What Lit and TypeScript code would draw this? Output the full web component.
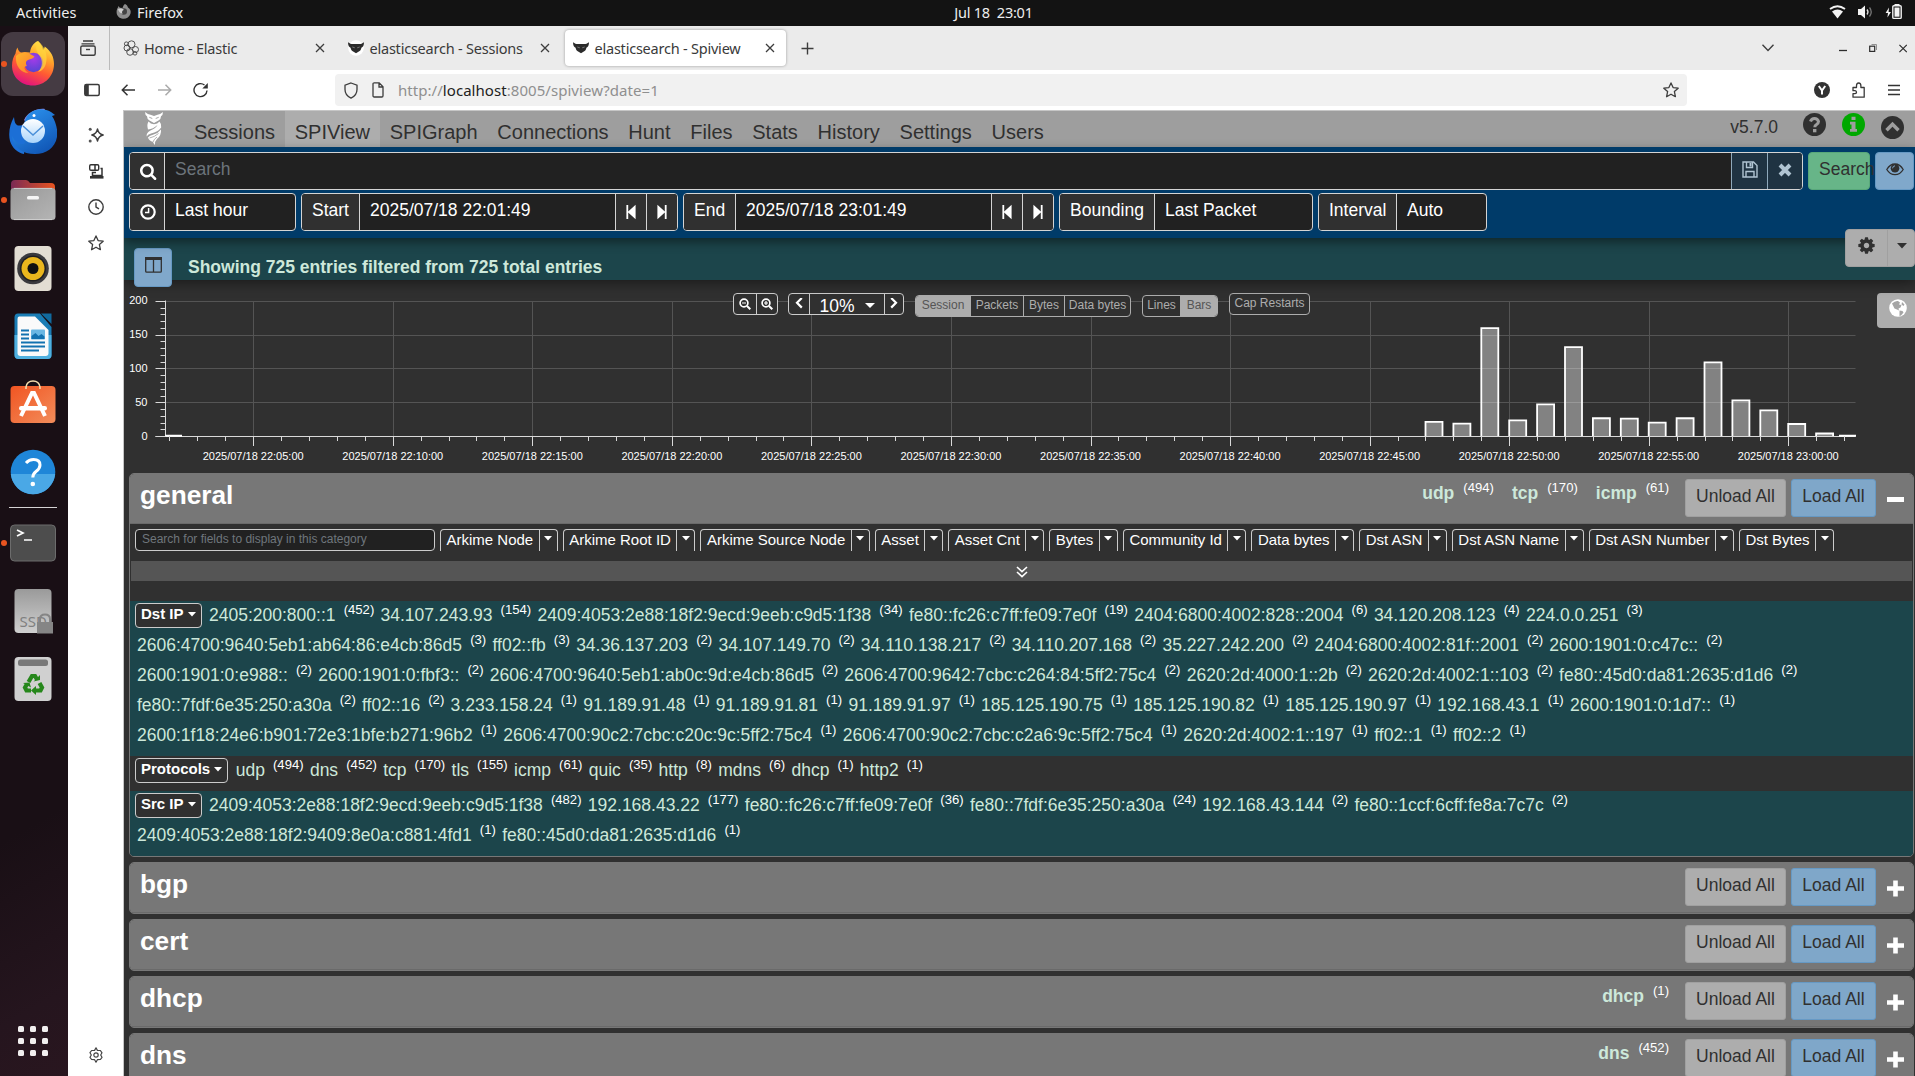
import { LitElement, html, svg, css, nothing } from "lit";
import { customElement, property } from "lit/decorators.js";

type Hit = [string, number];

const NAV = ["Sessions", "SPIView", "SPIGraph", "Connections", "Hunt", "Files", "Stats", "History", "Settings", "Users"];

const FIELDS = ["Arkime Node", "Arkime Root ID", "Arkime Source Node", "Asset", "Asset Cnt", "Bytes", "Community Id",
  "Data bytes", "Dst ASN", "Dst ASN Name", "Dst ASN Number", "Dst Bytes"];

const SPI: { label: string; lines: Hit[][] }[] = [
  {
    label: "Dst IP",
    lines: [
      [["2405:200:800::1", 452], ["34.107.243.93", 154], ["2409:4053:2e88:18f2:9ecd:9eeb:c9d5:1f38", 34], ["fe80::fc26:c7ff:fe09:7e0f", 19], ["2404:6800:4002:828::2004", 6], ["34.120.208.123", 4], ["224.0.0.251", 3]],
      [["2606:4700:9640:5eb1:ab64:86:e4cb:86d5", 3], ["ff02::fb", 3], ["34.36.137.203", 2], ["34.107.149.70", 2], ["34.110.138.217", 2], ["34.110.207.168", 2], ["35.227.242.200", 2], ["2404:6800:4002:81f::2001", 2], ["2600:1901:0:c47c::", 2]],
      [["2600:1901:0:e988::", 2], ["2600:1901:0:fbf3::", 2], ["2606:4700:9640:5eb1:ab0c:9d:e4cb:86d5", 2], ["2606:4700:9642:7cbc:c264:84:5ff2:75c4", 2], ["2620:2d:4000:1::2b", 2], ["2620:2d:4002:1::103", 2], ["fe80::45d0:da81:2635:d1d6", 2]],
      [["fe80::7fdf:6e35:250:a30a", 2], ["ff02::16", 2], ["3.233.158.24", 1], ["91.189.91.48", 1], ["91.189.91.81", 1], ["91.189.91.97", 1], ["185.125.190.75", 1], ["185.125.190.82", 1], ["185.125.190.97", 1], ["192.168.43.1", 1], ["2600:1901:0:1d7::", 1]],
      [["2600:1f18:24e6:b901:72e3:1bfe:b271:96b2", 1], ["2606:4700:90c2:7cbc:c20c:9c:5ff2:75c4", 1], ["2606:4700:90c2:7cbc:c2a6:9c:5ff2:75c4", 1], ["2620:2d:4002:1::197", 1], ["ff02::1", 1], ["ff02::2", 1]],
    ],
  },
  {
    label: "Protocols",
    lines: [[["udp", 494], ["dns", 452], ["tcp", 170], ["tls", 155], ["icmp", 61], ["quic", 35], ["http", 8], ["mdns", 6], ["dhcp", 1], ["http2", 1]]],
  },
  {
    label: "Src IP",
    lines: [
      [["2409:4053:2e88:18f2:9ecd:9eeb:c9d5:1f38", 482], ["192.168.43.22", 177], ["fe80::fc26:c7ff:fe09:7e0f", 36], ["fe80::7fdf:6e35:250:a30a", 24], ["192.168.43.144", 2], ["fe80::1ccf:6cff:fe8a:7c7c", 2]],
      [["2409:4053:2e88:18f2:9409:8e0a:c881:4fd1", 1], ["fe80::45d0:da81:2635:d1d6", 1]],
    ],
  },
];

const CATS: { name: string; hits: Hit[] }[] = [
  { name: "bgp", hits: [] },
  { name: "cert", hits: [] },
  { name: "dhcp", hits: [["dhcp", 1]] },
  { name: "dns", hits: [["dns", 452]] },
];

const BARS = [22.5, 20, 161, 25, 48.5, 133, 28, 27.5, 21.5, 28, 110.5, 54.5, 39.5, 19.5, 5.5];

const ic = (w: number, h: number, body: unknown, vb = `0 0 ${w} ${h}`) =>
  html`<svg width=${w} height=${h} viewBox=${vb} fill="none" style="display:block;flex:none">${body}</svg>`;

const searchPath = "M1216 832q0-185-131.5-316.5t-316.5-131.5-316.5 131.5-131.5 316.5 131.5 316.5 316.5 131.5 316.5-131.5 131.5-316.5zm512 832q0 52-38 90t-90 38q-54 0-90-38l-343-342q-179 124-399 124-143 0-273.5-55.5t-225-150-150-225-55.5-273.5 55.5-273.5 150-225 225-150 273.5-55.5 273.5 55.5 225 150 150 225 55.5 273.5q0 220-124 399l343 343q37 37 37 90z";
const cogPath = "M1152 896q0-106-75-181t-181-75-181 75-75 181 75 181 181 75 181-75 75-181zm512-109v222q0 12-8 23t-20 13l-185 28q-19 54-39 91 35 50 107 138 10 12 10 25t-9 23q-27 37-99 108t-94 71q-12 0-26-9l-138-108q-44 23-91 38-16 136-29 186-7 28-36 28h-222q-14 0-24.5-8.5t-11.5-21.5l-28-184q-49-16-90-37l-141 107q-10 9-25 9-14 0-25-11-126-114-165-168-7-10-7-23 0-12 8-23 15-21 51-66.5t54-70.5q-27-50-41-99l-183-27q-13-2-21-12.5t-8-23.5v-222q0-12 8-23t19-13l186-28q14-46 39-92-40-57-107-138-10-12-10-24 0-10 9-23 26-36 98.5-107.5t94.5-71.5q13 0 26 10l138 107q44-23 91-38 16-136 29-186 7-28 36-28h222q14 0 24.5 8.5t11.5 21.5l28 184q49 16 90 37l142-107q9-9 24-9 13 0 25 10 129 119 165 170 7 8 7 22 0 12-8 23-15 21-51 66.5t-54 70.5q26 50 41 98l183 28q13 2 21 12.5t8 23.5z";

const starPath = "M8 .9l2.1 4.7 5.1.6-3.8 3.4 1 5.1L8 12.2l-4.4 2.5 1-5.1L.8 6.2l5.1-.6z";
const search = (s: number) => ic(s, s, svg`<path fill="#fff" d=${searchPath} />`, "64 64 1728 1728");
const closeX = (c = "#3d3d3d") => ic(10, 10, svg`<path d="M1 1l8 8M9 1l-8 8" stroke=${c} stroke-width="1.3"/>`);
const star = ic(16, 16, svg`<path d=${starPath} stroke="#3d3d3d" stroke-width="1.3" stroke-linejoin="round"/>`);
const caret = (w: number, h: number) => ic(w, h, svg`<path fill="currentColor" d=${`M0 0H${w}L${w / 2} ${h}z`}/>`);
const stepBack = ic(10, 16, svg`<path fill="#fff" d="M.4 1h1.8v6.4L9.6.8v14.400L2.200 8.600V15H.4z"/>`);
const stepFwd = ic(10, 16, svg`<path fill="#fff" d="M9.600 1H7.800v6.400L.4.8v14.400l7.400-6.600V15h1.800z"/>`);
const owlFace = ic(16, 16, svg`<circle cx="8" cy="8" r="7.800" fill="#fff"/><path fill="#2b2b2b" d="M0 2.200c2 1.500 3.500 1.900 5 1.800h6c1.500.1 3-.3 5-1.800 0 3-1 4.800-2.600 5.600-.3 2-1.600 3.600-3.400 4.200L8 13.200 6 12c-1.800-.6-3.100-2.200-3.400-4.200C1 7 0 5.200 0 2.200z"/><path stroke="#999" stroke-width=".7" d="M4.300 7l2.500.8M11.700 7l-2.500.8"/>`);

/* Launcher icons, each drawn on a 48 by 48 canvas. */
const DOCK: { art: unknown; dot?: boolean; active?: boolean; sep?: boolean }[] = [
  {
    dot: true, active: true,
    art: svg`<defs>
      <linearGradient id="ff" x1=".8" y1="0" x2=".4" y2="1"><stop offset="0" stop-color="#fff14f"/><stop offset=".35" stop-color="#ffa52a"/><stop offset=".65" stop-color="#ff5a33"/><stop offset="1" stop-color="#e2147c"/></linearGradient>
      <radialGradient id="fp" cx=".5" cy=".3" r=".8"><stop offset="0" stop-color="#a63be8"/><stop offset="1" stop-color="#4b46d0"/></radialGradient>
      <linearGradient id="fo" x1="0" y1="0" x2="1" y2="1"><stop offset="0" stop-color="#ffb52b"/><stop offset="1" stop-color="#ff7a2d"/></linearGradient></defs>
      <path fill="url(#ff)" d="M29 1c3 3 4.500 6 5 9 1-1 1.500-2 1.700-3.500C42 11 45 17 45 24c0 12-9 21.500-21 21.500S3 37 3 25.500c0-5 1.500-9 3.500-12 .5-3 1-4.500 2-6 .5 2.500 1.500 4 3.500 5 3-1 6-.5 9 0 .5-5 3-9.500 8-11.500z"/>
      <circle cx="24.500" cy="22.500" r="9.700" fill="url(#fp)"/>
      <path fill="url(#fo)" d="M7 16c4-3.500 9-4 14-2l4.500 2.500c-1 2-4 2.500-6.500 3.500-2.500 1-2.500 4-1 6-4 0-3 4 1.500 7C12 33 6 26 7 16z"/>
      <path fill="#ffd53e" opacity=".7" d="M29 1c7 6 10 14 8 22-1 5-4 8-8 9 5-5 5-12 1-17-3-4-4-9-1-14z"/>`,
  },
  {
    art: svg`<defs><linearGradient id="tb" x1="0" y1="0" x2=".6" y2="1"><stop offset="0" stop-color="#2f9af5"/><stop offset="1" stop-color="#1259b8"/></linearGradient><linearGradient id="te" x1="0" y1="0" x2="0" y2="1"><stop offset="0" stop-color="#fff"/><stop offset="1" stop-color="#a9d4fb"/></linearGradient></defs>
      <path fill="#1c6fd6" d="M5 9c-4 7-6 16-4 24 2 7 8 12 14 13l3-30C10 18 6 20 5 9z"/>
      <path fill="#8f86e8" d="M15 12C19 4 28 0 36 1l-4 8-14 6z"/>
      <path fill="url(#tb)" d="M18 8c5-7 16-9 24-4l4 3-3 1c4 6 6 14 5 21-2 11-11 17-22 17C14 46 4 40 3 28c4 8 10 9 13 7-4-9-2-20 2-27z"/>
      <circle cx="24" cy="23" r="12" fill="url(#te)"/><path d="M14 18l10 9 10-9" stroke="#4a90d9" stroke-width="1.500"/>
      <circle cx="25" cy="7.500" r="1.500" fill="#fff"/>`,
  },
  {
    dot: true,
    art: svg`<defs><linearGradient id="fl" x1="0" y1="0" x2="1" y2="0"><stop offset="0" stop-color="#7a2a55"/><stop offset="1" stop-color="#e95420"/></linearGradient><linearGradient id="fg" x1="0" y1="0" x2="1" y2="1"><stop offset="0" stop-color="#989898"/><stop offset="1" stop-color="#b5b5b5"/></linearGradient></defs>
      <path fill="url(#fl)" d="M2 8q0-4 4-4h11q2 0 4 3h21q4 0 4 4v10H2z"/><rect x="1.500" y="12" width="45" height="32" rx="3.500" fill="url(#fg)"/><path stroke="#d8d8d8" stroke-width=".8" d="M5 12.400h38M5 43.600h38"/><rect x="18" y="20" width="12" height="3.600" rx="1.500" fill="#f5f5f5"/>`,
  },
  {
    art: svg`<rect x="5.500" y="2" width="37" height="45" rx="4" fill="#e2ddd3"/><circle cx="24" cy="24.500" r="15.800" fill="#3a3a3e"/><circle cx="24" cy="24.500" r="13" fill="#1f1f22"/><circle cx="24" cy="24.500" r="11.500" fill="#eab61d"/><circle cx="24" cy="24.500" r="5.500" fill="#111"/>`,
  },
  {
    art: svg`<path fill="#1a7db5" d="M9 1.500h22L42.500 15v28q0 4-4 4h-29q-4 0-4-4V5.500q0-4 3.500-4z"/><path fill="#4fb0df" d="M5.500 23h37v20q0 4-4 4h-29q-4 0-4-4z"/><path fill="#fafafa" d="M10 4.500h16L39.500 18v23q0 3-3 3h-25q-3 0-3-3V7q0-2.500 1.500-2.500z"/><path fill="#116a9e" d="M32 1.500h10.500V12z"/><path stroke="#1272b0" stroke-width="1.900" d="M12 18.500h8M12 22.500h8M12 26.500h8M12 30.500h24M12 34.500h24M12 38.500h18"/><rect x="22" y="17.500" width="14" height="10" rx="1" fill="#69b7e3"/><path fill="#1272b0" d="M22.500 27v-3l4-3 3 3 3-2 3 2.500V27z"/>`,
  },
  {
    art: svg`<defs><linearGradient id="sw" x1="0" y1="0" x2="1" y2="1"><stop offset="0" stop-color="#f15522"/><stop offset="1" stop-color="#f28d5b"/></linearGradient></defs><rect x="1.500" y="6" width="45" height="37" rx="4" fill="url(#sw)"/><path d="M17 9V7q1-6 7-6t7 6v2" stroke="#f6dfae" stroke-width="1.500"/><path stroke="#fff" stroke-width="4" d="M12 36L23 13h2l11 23"/><rect x="10" y="26" width="28" height="4.500" rx="2.200" fill="#fff"/>`,
  },
  {
    art: svg`<circle cx="24" cy="24" r="22.300" fill="#1f86d8"/><path fill="#4aa8e6" d="M1.800 26h44.400a22.300 22.300 0 0 1-44.400 0z"/><path d="M17 15q3-3.500 7.500-3.500 6.500 0 6.500 5.500 0 3.500-4 6.500-3.200 2.500-3.200 6" stroke="#fff" stroke-width="3"/><circle cx="23.800" cy="36" r="2.300" fill="#fff"/>`,
  },
  {
    dot: true, sep: true,
    art: svg`<rect x="1.500" y="6" width="45" height="36" rx="4" fill="#4d4d4d" stroke="#6c6c6c"/><path d="M8 11l6 3-6 3M15 21h8" stroke="#fff" stroke-width="1.700"/>`,
  },
  {
    art: svg`<defs><linearGradient id="sd" x1="0" y1="0" x2="0" y2="1"><stop offset="0" stop-color="#9a9a9a"/><stop offset="1" stop-color="#cfcfcf"/></linearGradient></defs><rect x="5.500" y="2" width="37" height="44" rx="4" fill="url(#sd)"/><text x="10.500" y="40" font-family="Noto Sans, sans-serif" font-size="15" fill="#808080">SSD</text><rect x="28" y="35" width="16" height="11.500" fill="#858585"/><path d="M31 35v-3q0-4.500 5-4.500t5 4.500v3" stroke="#858585" stroke-width="2"/>`,
  },
  {
    art: svg`<rect x="5.500" y="2" width="37" height="44" rx="4" fill="#d0d0d0"/><rect x="9" y="4.500" width="30" height="6.500" rx="2.500" fill="#787878"/><g stroke="#26871b" stroke-width="4.200"><path d="M19.500 27l3.500-6h3l2 3.500"/><path d="M30.500 28l2.500 4.500-1.500 3h-6"/><path d="M22 35.500h-4.500L16 32.500l2-3.500"/></g><path fill="#26871b" d="M24.500 26.500l6.500-1.500v-5zM27 31v9l-5-4.500zM14 28l6.500-.5 1.500 5z"/>`,
  },
];

@customElement("ubuntu-dock")
class UbuntuDock extends LitElement {
  static styles = css`
    :host { display: flex; flex-direction: column; width: 68px; flex: none; padding-top: 4px; box-sizing: border-box;
      background: linear-gradient(150deg, #190f15 0%, #190f15 75%, #25151e 92%, #29161f 100%); }
    .slot { height: 64px; margin: 2px 0; position: relative; width: 66px; display: flex; align-items: center; justify-content: center; }
    .tile { width: 64px; height: 64px; border-radius: 12px; display: flex; align-items: center; justify-content: center; }
    .active { background: #453b43; }
    .dot { position: absolute; left: 1px; top: 29px; width: 6px; height: 6px; border-radius: 50%; background: #e95420; }
    .sep { width: 48px; height: 1px; background: #d5d3d4; margin: 1px 0 1px 9px; }
    .apps { margin: auto 0 20px 18px; display: grid; grid-template-columns: repeat(3, 6px); gap: 6px; }
    .apps i { width: 6px; height: 6px; border-radius: 1.500px; background: #f1efef; }
  `;
  render() {
    return html`
      ${DOCK.map((d) => html`
        ${d.sep ? html`<div class="sep"></div>` : nothing}
        <div class="slot"><div class="tile ${d.active ? "active" : ""}">${ic(48, 48, d.art)}</div>${d.dot ? html`<span class="dot"></span>` : nothing}</div>`)}
      <div class="apps">${Array.from({ length: 9 }, () => html`<i></i>`)}</div>`;
  }
}

@customElement("spi-timeline")
class SpiTimeline extends LitElement {
  static styles = css`
    :host { display: block; height: 193px; position: relative; font-family: "Liberation Sans", Arial, sans-serif; }
    svg.plot { display: block; }
    .controls { position: absolute; left: 609px; top: 13px; display: flex; align-items: flex-start; }
    .group { display: flex; height: 22px; box-sizing: border-box; border: 1px solid #ccc; border-radius: 4px; background: #303030; overflow: hidden; color: #fff; }
    .group > span { display: flex; justify-content: center; box-sizing: border-box; border-left: 1px solid #ccc; height: 20px; padding-top: 4px; white-space: nowrap; }
    .group > span:first-child { border-left: 0; }
    .group > .pct { font-size: 17.500px; line-height: 24px; padding: 0; gap: 10px; width: 75px; }
    .pct svg { margin-top: 9px; }
    .zoom { width: 22px; }
    .zoom + .zoom { width: 21px; }
    .pan { width: 20px; }
    .pct + .pan { width: 19px; }
    .g2 { margin-left: 10px; }
    .g3 { margin-left: 11px; }
    .text { border-color: #adadad; color: #adadad; font-size: 12px; line-height: 16px; }
    .group.text > span { border-color: #adadad; padding-top: 1px; }
    .group.text > .on { background: #adadad; color: #555; }
    .low { margin-top: 2px; }
    .globe { position: absolute; right: 0; top: 13px; width: 38px; height: 35px; background: #adadad; border-radius: 4px 0 0 4px; box-sizing: border-box; padding: 6px 0 0 12px; }
  `;
  render() {
    const y0 = 156.200;
    const y = (v: number) => y0 - v * 0.677;
    const major = Array.from({ length: 12 }, (_, i) => 129.200 + i * 139.550);
    const stamp = (i: number) => {
      const m = 5 + i * 5;
      return `2025/07/18 ${m < 60 ? 22 : 23}:${String(m % 60).padStart(2, "0")}:00`;
    };
    const minor = Array.from({ length: 62 }, (_, i) => 129.200 - 3 * 27.910 + i * 27.910).filter((x) => x > 41 && x < 1731);
    return html`
      <svg class="plot" width="1791" height="193" font-family="Liberation Sans, Arial, sans-serif" font-size="11" fill="#fff">
        ${[50, 100, 150, 200].map((v) => svg`<path d=${`M42 ${Math.round(y(v)) + 0.5}H1731.500`} stroke="#545454"/>`)}
        ${major.map((x) => svg`<path d=${`M${Math.round(x) + 0.5} 21V156`} stroke="#545454"/>`)}
        ${BARS.map((v, i) => {
          const x = 1301.500 + i * 27.900, t = y(v) + 1;
          return svg`<rect x=${x} y=${t} width="17" height=${y0 - t} fill="#fff" fill-opacity=".4"/><path d=${`M${x} ${y0}V${t}H${x + 17}V${y0}`} fill="none" stroke="#fff" stroke-width="1.800"/>`;
        })}
        <path d="M41.500 20.500V156.500M31.500 156.500H1731.500" stroke="#d9d9d9"/>
        <path d="M41 155.700h17M1715 155.700h17" stroke="#fff" stroke-width="2"/>
        ${Array.from({ length: 21 }, (_, i) => svg`<path d=${`M${i % 5 ? 36.500 : 31.500} ${Math.round(y(i * 10)) + 0.5}H41.500`} stroke="#d9d9d9"/>`)}
        ${minor.map((x) => svg`<path d=${`M${Math.round(x) + 0.5} 156v5`} stroke="#d9d9d9"/>`)}
        ${major.map((x) => svg`<path d=${`M${Math.round(x) + 0.5} 156v10`} stroke="#d9d9d9"/>`)}
        ${[0, 50, 100, 150, 200].map((v) => svg`<text x="23.500" y=${y(v) + 3.500} text-anchor="end">${v}</text>`)}
        ${major.map((x, i) => svg`<text x=${x} y="180" text-anchor="middle">${stamp(i)}</text>`)}
      </svg>
      <div class="controls">
        <div class="group">
          <span class="zoom">${ic(12, 12, svg`<circle cx="5" cy="5" r="3.900" stroke="#fff" stroke-width="1.700"/><path d="M8 8l3.300 3.300" stroke="#fff" stroke-width="2"/><path d="M3 5h4" stroke="#fff" stroke-width="1.200"/>`)}</span>
          <span class="zoom">${ic(12, 12, svg`<circle cx="5" cy="5" r="3.900" stroke="#fff" stroke-width="1.700"/><path d="M8 8l3.300 3.300" stroke="#fff" stroke-width="2"/><path d="M3 5h4M5 3v4" stroke="#fff" stroke-width="1.200"/>`)}</span>
        </div>
        <div class="group g2">
          <span class="pan">${ic(8, 12, svg`<path d="M6.800 0L2 4.800l4.800 4.800" stroke="#fff" stroke-width="2.200"/>`)}</span>
          <span class="pct">10% ${caret(10, 5)}</span>
          <span class="pan">${ic(8, 12, svg`<path d="M1.200 0L6 4.800l-4.800 4.800" stroke="#fff" stroke-width="2.200"/>`)}</span>
        </div>
        <div class="group text low g3">
          <span class="on" style="width:54px">Session</span><span style="width:53px">Packets</span><span style="width:41px">Bytes</span><span style="width:66px">Data bytes</span>
        </div>
        <div class="group text low g3">
          <span style="width:37px">Lines</span><span class="on" style="width:37px">Bars</span>
        </div>
        <div class="group text g3"><span style="width:79px">Cap Restarts</span></div>
      </div>
      <div class="globe">${ic(18, 18, svg`<circle cx="9" cy="9" r="8.800" fill="#fff"/><path fill="#a5a5a5" d="M3 4.500Q6 1.500 9 2l2 1.500-1 2 2.500.5-1 2.500-2 1 .5 2-2-1-2.500-1L4 6.500zM10.500 11.500l3 .5 1 1.500-2.500 3-1.500.5zM13 3l2.500 2.500-1 1.500-2-1.500z"/>`)}</div>`;
  }
}

@customElement("spi-category")
class SpiCategory extends LitElement {
  @property() name = "";
  @property({ attribute: false }) hits: Hit[] = [];
  @property({ type: Boolean }) open = false;
  static styles = css`
    :host { display: block; margin: 0 1px 5px 5px; box-sizing: border-box; border: 1px solid #777; border-radius: 5px; overflow: hidden;
      background: #303030; font-family: "Liberation Sans", Arial, sans-serif; font-size: 17.500px; color: #fff; flex: none; }
    .head { display: flex; height: 50px; box-sizing: border-box; background: #777; border-bottom: 1px solid #6a6a6a; padding: 5px 10px 0 10px; }
    .title { font-size: 26.250px; font-weight: 700; line-height: 42px; margin-top: -5px; flex: 1; }
    .hit { line-height: 38px; margin-top: -5px; font-weight: 700; color: #cde8da; margin-right: 18px; white-space: nowrap; }
    .hit sup { font-size: 13.125px; font-weight: 400; color: #fff; line-height: 0; vertical-align: baseline; position: relative; top: -6.600px; margin-left: 9px; }
    .btn { height: 38px; box-sizing: border-box; border: 1px solid #a0a0a0; background: #adadad; border-radius: 3px; color: #303030; line-height: 32px; text-align: center; }
    .unload { width: 101px; margin: 0 5px 0 -2px; }
    .load { width: 85px; background: #7fa7c9; border-color: #6699c4; margin-right: 11px; }
    .sign { width: 17px; padding-top: 12px; margin-right: -1px; }
    .fields { display: flex; gap: 5px; height: 31px; padding: 5px 0 0 5px; box-sizing: border-box; font-size: 15px; }
    .filter { width: 300px; height: 22px; box-sizing: border-box; border: 1px solid #ccc; border-radius: 4px; background: #212121; color: #6f767c;
      font-size: 12px; line-height: 18px; padding-left: 6px; flex: none; }
    .field { display: flex; height: 22px; border: 1px solid #ccc; border-bottom: 0; border-radius: 4px 4px 0 0; box-sizing: border-box; white-space: nowrap; line-height: 19px; flex: none; }
    .field b { font-weight: 400; padding: 0 5.500px; }
    .field i { border-left: 1px solid #ccc; width: 18px; display: flex; justify-content: center; padding-top: 6px; box-sizing: border-box; }
    .more { height: 20px; background: #555; margin: 6px 1px 20px 1px; display: flex; justify-content: center; padding-top: 5px; box-sizing: border-box; }
    .group { padding: 0 0 6px 5px; }
    .group:nth-of-type(odd) { background: #1c454b; }
    .line { height: 30px; line-height: 30px; display: flex; white-space: nowrap; color: #cde8da; padding-left: 2px; position: relative; top: -1px; }
    .line:last-child { margin-bottom: -1px; }
    .line sup { font-size: 13.125px; line-height: 30px; color: #fff; vertical-align: baseline; position: relative; top: -5.500px; margin: 0 6.300px 0 8.100px; }
    .label { height: 25px; box-sizing: border-box; border: 1px solid #ccc; border-radius: 4px; background: #303030; color: #fff; font-weight: 700; font-size: 15px;
      line-height: 19px; padding: 0 5px; margin: 3px 7.500px 0 -2px; display: flex; gap: 4px; }
    .label svg { margin-top: 8px; }
  `;
  render() {
    return html`
      <div class="head">
        <span class="title">${this.name}</span>
        ${this.hits.map(([n, c]) => html`<span class="hit">${n}<sup>(${c})</sup></span>`)}
        <span class="btn unload">Unload All</span><span class="btn load">Load All</span>
        <span class="sign">${ic(17, 17, svg`<path fill="#fff" d=${this.open ? "M0 6h17v5H0z" : "M6.200 .5h4.600v5.700H17v4.600h-6.200v5.700H6.200v-5.700H0V6.200h6.200z"}/>`)}</span>
      </div>
      ${this.open ? html`
        <div class="body">
          <section class="fields"><span class="filter">Search for fields to display in this category</span>
            ${FIELDS.map((f) => html`<span class="field"><b>${f}</b><i>${caret(8, 4.500)}</i></span>`)}</section>
          <section class="more">${ic(12, 12, svg`<path d="M1 1l5 4.600L11 1M1 6l5 4.600L11 6" stroke="#fff" stroke-width="1.600"/>`)}</section>
          ${SPI.map((g) => html`<div class="group">${g.lines.map((l, i) => html`<div class="line">${i === 0 ? html`<span class="label">${g.label}${caret(8, 4.500)}</span>` : nothing}${l.map(([n, c]) => html`<span>${n}</span><sup>(${c})</sup>`)}</div>`)}</div>`)}
        </div>` : nothing}`;
  }
}

@customElement("app-root")
class AppRoot extends LitElement {
  static styles = css`
    :host { display: flex; flex-direction: column; width: 1915px; height: 1076px; overflow: hidden; background: #fff; font-family: "Liberation Sans", Arial, sans-serif; }
    .row { display: flex; }
    .ui { font-family: "Noto Sans", sans-serif; }
    .topbar { height: 26px; background: #131313; color: #eee; display: grid; grid-template-columns: 1fr auto 1fr; flex: none; font-size: 14.500px; line-height: 24px; letter-spacing: 0; }
    .topleft { display: flex; padding-left: 16px; }
    .topleft span:first-child { width: 100px; }
    .topleft svg { margin: 4px 6px 0 0; }
    .clock { white-space: pre; transform: translateX(36px); letter-spacing: -0.250px; }
    .tray { display: flex; justify-content: flex-end; padding: 4px 13px 0 0; gap: 12px; }
    .desk { display: flex; flex: 1; min-height: 0; }
    .browser { flex: 1; display: flex; flex-direction: column; min-width: 0; }
    .tabs { height: 44px; background: #ebebeb; display: flex; flex: none; font-size: 14.500px; letter-spacing: -0.220px; color: #3a3a3a; }
    .recent { width: 42px; border-right: 1px solid #bbb; padding: 14px 0 0 12px; box-sizing: border-box; }
    .tab { width: 221px; height: 36px; margin: 4px 4px 0 0; display: flex; align-items: center; padding: 0 11px 0 8px; box-sizing: border-box; border-radius: 4px; white-space: nowrap; }
    .tab span { flex: 1; padding-left: 5.500px; }
    .tab.first { padding: 0 6px 0 12.500px; }
    .tab.second { margin-left: 4px; padding-left: 9px; width: 222px; }
    .current { background: #fff; box-shadow: 0 0 3px rgba(0, 0, 0, 0.35); }
    .winctl { margin-left: auto; display: flex; padding-right: 8px; }
    .nav { height: 40px; display: flex; flex: none; padding: 12px 0 0 16px; box-sizing: border-box; }
    .url { width: 1352px; height: 32px; margin: -8px 0 0 126px; background: #f1f1f1; border-radius: 4px; display: flex; align-items: center; padding: 0 8px; box-sizing: border-box; font-size: 15px; color: #8f8f8f; letter-spacing: 0.050px; }
    .url b { font-weight: 400; color: #222; }
    .url span { flex: 1; padding-left: 14px; }
    .content { display: flex; flex: 1; min-height: 0; }
    .side { width: 55px; flex: none; display: flex; flex-direction: column; align-items: center; padding: 17px 0 13px 1px; box-sizing: border-box; gap: 20px; }
    .page { flex: 1; min-width: 0; border: 1px solid #c6c6c6; border-right: 0; border-bottom: 0; background: #303030; display: flex; flex-direction: column; overflow: hidden; font-size: 17.500px; color: #fff; }
    .menu { height: 36px; background: #9e9e9e; color: #303030; display: flex; flex: none; font-size: 20px; line-height: 42px; }
    .menu a { padding: 0 9.880px; height: 36px; }
    .menu a.on { background: #adadad; }
    .logo { width: 50px; padding: 1px 0 0 21px; box-sizing: border-box; margin-right: 10px; }
    .version { margin-left: auto; font-size: 17.500px; line-height: 32px; }
    .query { height: 91px; box-sizing: border-box; background: #003b69; padding: 5px 0 0 5px; flex: none; box-shadow: 0 4px 10px rgba(0, 0, 0, 0.450); position: relative; z-index: 2; line-height: 32px; }
    .box { display: flex; height: 38px; box-sizing: border-box; border: 1px solid #d4d4d4; border-radius: 4px; background: #212121; overflow: hidden; margin-right: 5px; }
    .box > span { box-sizing: border-box; border-left: 1px solid #d4d4d4; white-space: nowrap; padding-left: 10px; flex: none; }
    .box > span:first-child { border-left: 0; }
    .box > .fill { flex: 1; }
    .box > .hint { color: #6c747b; }
    .box > .pre { background: #303030; }
    .box > .lead { width: 34px; padding: 10px 0 0 9.500px; }
    .box > .mini { background: #303030; width: 31px; padding: 10px 0 0 10px; }
    .box > .act { background: #1f3342; border-color: #8fa9bb; width: 36px; padding: 8px 0 0 10px; }
    .box > .act + .act { width: 35px; padding-top: 10px; }
    .go { width: 62px; height: 38px; box-sizing: border-box; background: #67b588; border: 1px solid #58a87a; border-radius: 4px; color: #303030; padding-left: 10px; margin-right: 5px; white-space: nowrap; }
    .eye { width: 39px; height: 38px; box-sizing: border-box; background: #80a8cb; border: 1px solid #6699c4; border-radius: 4px; padding: 9px 0 0 10px; }
    .gear { position: absolute; right: 0; top: 82px; height: 38px; width: 70px; display: flex; box-sizing: border-box; border: 1px solid #a0a0a0; background: #adadad; border-radius: 4px; color: #303030; }
    .status { height: 42px; background: #1c454b; color: #cde8da; font-weight: 700; box-sizing: border-box; padding: 13px 0 0 64px; line-height: 32px; flex: none; position: relative; z-index: 1; box-shadow: 0 3px 12px rgba(0, 0, 0, 0.450); }
    .panel { position: absolute; left: 10px; top: 10px; width: 38px; height: 39px; box-sizing: border-box; background: #80a8cb; border: 1px solid #6699c4; border-radius: 4px; padding: 8px 0 0 10px; }
  `;
  render() {
    const time = (label: string, value: string, w1: number) => html`
      <div class="box"><span class="pre" style="width:${w1}px">${label}</span><span style="width:256px">${value}</span><span class="mini">${stepBack}</span><span class="mini">${stepFwd}</span></div>`;
    return html`
      <div class="topbar ui">
        <div class="topleft"><span>Activities</span>${ic(15, 15, svg`<path fill="#8e8e8e" d="M9 0c2 1 2.500 2 3 3.500C14.500 5 15 7 14.500 9.500 13.500 13 10.500 15 7 14.800 3 14.500.5 11.500.6 8c0-2 .6-3.500 1.400-4.500L2.500 2l1.300 1.700L6.500 4C7 2.500 7.500 1 9 0z"/><circle cx="7.800" cy="7.500" r="3.200" fill="#444"/><path fill="#cfcfcf" d="M2 5q3-1.500 6 .8Q5 7 6.500 10 3 9 2 5z"/>`)}<span>Firefox</span></div>
        <span class="clock">Jul 18  23:01</span>
        <div class="tray">
          ${ic(17, 16, svg`<path fill="#f3f3f3" d="M3 7.500q5.500-4 11 0L8.500 14.500z"/><path d="M1 5q7.500-5.500 15 0" stroke="#f3f3f3" stroke-width="1.800"/>`)}
          ${ic(15, 16, svg`<path fill="#f3f3f3" d="M0 5h3l4-3.500v13L3 11H0z"/><path d="M9 5.500q2 2.500 0 5" stroke="#ddd" stroke-width="1.300"/><path d="M11.500 3.500q3.500 4.500 0 9" stroke="#777" stroke-width="1.300"/>`)}
          ${ic(17, 16, svg`<path fill="#f3f3f3" d="M4 3.500L.6 9H3l-.6 4.500L6 8H3.600zM9.500 0h5v2h-5z"/><rect x="7.800" y="1.800" width="8.400" height="12.600" rx="1" stroke="#f3f3f3" stroke-width="1.400"/><rect x="9.500" y="3.500" width="5" height="9.200" fill="#f3f3f3"/>`)}
        </div>
      </div>
      <div class="desk">
        <ubuntu-dock></ubuntu-dock>
        <div class="browser">
          <div class="tabs ui">
            <div class="recent">${ic(16, 16, svg`<path d="M3 1h10M1.500 3.800h13" stroke="#3d3d3d" stroke-width="1.300"/><rect x=".8" y="6" width="14.400" height="9.300" rx="1.500" stroke="#3d3d3d" stroke-width="1.400"/><path d="M6 9.500h4" stroke="#3d3d3d" stroke-width="1.400"/>`)}</div>
            <div class="tab first">${ic(16, 16, svg`<g stroke="#444" stroke-width=".9"><circle cx="8.500" cy="4.300" r="3.500"/><circle cx="4" cy="8" r="3"/><circle cx="7" cy="12" r="3.300"/><circle cx="12.500" cy="9.500" r="3"/><circle cx="3.300" cy="3.800" r="1.900"/><circle cx="12" cy="13.300" r="1.800"/></g>`)}<span>Home - Elastic</span>${closeX()}</div>
            <div class="tab second">${owlFace}<span>elasticsearch - Sessions</span>${closeX()}</div>
            <div class="tab current">${owlFace}<span>elasticsearch - Spiview</span>${closeX()}</div>
            <div style="padding:16px 0 0 11px">${ic(13, 13, svg`<path d="M6.500 .5v12M.5 6.500h12" stroke="#3d3d3d" stroke-width="1.400"/>`)}</div>
            <div class="winctl">
              <div style="padding:18px 65px 0 0">${ic(12, 8, svg`<path d="M.5 .8L6 6.500 11.500.8" stroke="#3d3d3d" stroke-width="1.400"/>`)}</div>
              <div style="padding:23px 22px 0 0">${ic(8, 3, svg`<path d="M0 1.500h8" stroke="#2d2d2d" stroke-width="1.300"/>`)}</div>
              <div style="padding:18px 22px 0 0">${ic(8, 8, svg`<rect x=".7" y="2.200" width="5" height="5.200" stroke="#2d2d2d" stroke-width="1.200"/><path d="M2.500 .5h5v5.500" stroke="#888" stroke-width=".9"/>`)}</div>
              <div style="padding:18px 0 0 0">${ic(8, 9, svg`<path d="M.4 .8l7.400 7.400M7.800 .8L.4 8.200" stroke="#2d2d2d" stroke-width="1.200"/>`)}</div>
            </div>
          </div>
          <div class="nav ui">
            ${ic(16, 16, svg`<rect x=".8" y="2.600" width="14.400" height="10.800" rx="1.500" stroke="#3a3a3a" stroke-width="1.500"/><path fill="#3a3a3a" d="M1 3h3.800v10H1z"/>`)}
            <div style="margin-left:21px">${ic(15, 16, svg`<path d="M14 8H1.500M6.500 2.800L1.300 8l5.200 5.200" stroke="#333" stroke-width="1.500"/>`)}</div>
            <div style="margin-left:21px">${ic(15, 16, svg`<path d="M1 8h12.500M8.500 2.800L13.700 8l-5.200 5.200" stroke="#aaa" stroke-width="1.500"/>`)}</div>
            <div style="margin-left:21px">${ic(16, 16, svg`<path d="M14 8.500A6.500 6.500 0 1 1 11.500 3" stroke="#333" stroke-width="1.400"/><path fill="#333" d="M14.800 1v5.500H9.300z"/>`)}</div>
            <div class="url">${ic(16, 17, svg`<path d="M8 1l6 2.200v4.300c0 4-2.500 7-6 8.600-3.500-1.600-6-4.600-6-8.600V3.200z" stroke="#3d3d3d" stroke-width="1.300"/>`)}
              <div style="width:13px"></div>${ic(12, 16, svg`<path d="M1 2q0-1.200 1.200-1.200h5L11 4.700v9q0 1.300-1.200 1.300H2.200Q1 15 1 13.700zM7 1v4h4" stroke="#3d3d3d" stroke-width="1.300"/>`)}
              <span>http://<b>localhost</b>:8005/spiview?date=1</span>${star}</div>
            <div style="margin-left:127px">${ic(16, 16, svg`<circle cx="8" cy="8" r="8" fill="#333"/><path d="M4.800 4L8 8.500 11.200 4M8 8v4.500" stroke="#fff" stroke-width="2"/>`)}</div>
            <div style="margin:0 0 0 21px">${ic(16, 16, svg`<path d="M2 5.500h3.500V4Q5.500 1 7.700 1t2.200 3v1.500h3.300v9.700H2v-3.500h2q1.500-.3 1.500-1.500T4 8.700H2z" stroke="#3a3a3a" stroke-width="1.300" stroke-linejoin="round"/>`)}</div>
            <div style="margin-left:20px">${ic(14, 16, svg`<path d="M1 3.500h12M1 8h12M1 12.500h12" stroke="#333" stroke-width="1.300"/>`)}</div>
          </div>
          <div class="content">
            <div class="side">
              ${ic(16, 16, svg`<path d="M9.500 2q1 5 5.700 6-4.700 1-5.700 6-1-5-5.700-6 4.700-1 5.700-6z" stroke="#3d3d3d" stroke-width="1.400" stroke-linejoin="round"/><circle cx="2.200" cy="2.200" r="1.500" fill="#555"/><circle cx="2.200" cy="14" r="1.500" fill="#555"/>`)}
              ${ic(16, 16, svg`<rect x="1.700" y="1.700" width="9" height="5.600" rx="1.200" stroke="#333" stroke-width="1.400"/><path d="M7 2v5M12.500 5.500h1.500v7H4.500V9.500H8" stroke="#333" stroke-width="1.500"/><path fill="#333" d="M2 13h13.500v2.600H2z"/>`)}
              ${ic(16, 16, svg`<circle cx="8" cy="8" r="7.200" stroke="#3d3d3d" stroke-width="1.400"/><path d="M8 3.500V8l3 1.800" stroke="#3d3d3d" stroke-width="1.400"/>`)}
              ${star}
              <div style="margin-top:auto">${ic(16, 16, svg`<path d="M8 .8l1.400 2.600 3 .1 1.600 2.300L12.700 8l1.300 2.300-1.600 2.200-3 .2L8 15.200l-1.400-2.500-3-.2L2 10.300 3.300 8 2 5.700l1.600-2.200 3-.1z" stroke="#444" stroke-width="1.200" stroke-linejoin="round"/><circle cx="8" cy="8" r="2.200" stroke="#444" stroke-width="1.200"/>`)}</div>
            </div>
            <div class="page">
              <div class="menu">
                <div class="logo">${ic(18, 33, svg`<path fill="#fff" d="M0 0q3 2.500 5.500 2.800L9 4l3.500-1.200Q15 2.500 18 0q0 3-2 4.200 0 3-2.500 4.300L9 11 4.500 8.500Q2 7.200 2 4.200 0 3 0 0z"/><path stroke="#9e9e9e" stroke-width=".9" d="M4.300 5.300l3 1.200M13.700 5.300l-3 1.200"/><path fill="#fff" d="M3.500 9.500q2 2.500 5.500 2.800 3.500-.3 5.500-2.800 2.200 2.500 1.700 6Q13 20 6 21.500q-3.500 1-4.300 3Q1 21 5.500 18.500 11 16 12.500 13 8 17 3 17.500 1.500 12.500 3.500 9.500z"/><path fill="#fff" d="M16 17.500q.5 6-4 9.500-2.500 2.500-2 6-1-.5-2-3-4-1.500-5-4.500Q4.500 23.500 8.500 22.500 13.500 21 16 17.500z"/><path stroke="#9e9e9e" stroke-width=".8" d="M4.500 26q5-1 9-4.500M8 30q1-3 4-5"/>`)}</div>
                ${NAV.map((n) => html`<a class=${n === "SPIView" ? "on" : ""}>${n}</a>`)}
                <span class="version">v5.7.0</span>
                <div style="margin:2px 0 0 25px">${ic(23, 23, svg`<circle cx="11.500" cy="11.500" r="11.500" fill="#303030"/><path d="M7.500 8.500Q8.500 5.500 11.500 5.500t4 3q0 2-2.200 3.300-1.500.9-1.500 2.500" stroke="#9e9e9e" stroke-width="3"/><path fill="#9e9e9e" d="M10 16h3.400v3.300H10z"/>`)}</div>
                <div style="margin:2px 0 0 16px">${ic(23, 23, svg`<circle cx="11.500" cy="11.500" r="11.500" fill="#00a800"/><path fill="#9e9e9e" d="M9.500 3.800h4V7h-4zM8 8.700h5.500v7.400H15v2.700H8v-2.700h1.500v-4.700H8z"/>`)}</div>
                <div style="margin:5px 11px 0 16px">${ic(23, 23, svg`<circle cx="11.500" cy="11.500" r="11.500" fill="#303030"/><path d="M5.500 14.200l6-6 6 6" stroke="#9e9e9e" stroke-width="3.400"/>`)}</div>
              </div>
              <div class="query">
                <div class="row">
                  <div class="box" style="width:1674px">
                    <span class="pre lead">${search(17)}</span>
                    <span class="fill hint">Search</span>
                    <span class="act">${ic(16, 17, svg`<path d="M1 1h10.500L15 4.500V16H1zM4 16v-5.500h8V16M4.500 1v5.500h6V1" stroke="#b0c4d2" stroke-width="1.400"/><path fill="#b0c4d2" d="M7.500 2h2v3.500h-2z"/>`)}</span>
                    <span class="act">${ic(14, 14, svg`<path d="M2 2l10 10M12 2L2 12" stroke="#b0c4d2" stroke-width="4"/>`)}</span>
                  </div>
                  <div class="go">Search</div>
                  <div class="eye">${ic(18, 14, svg`<path d="M.8 7.500Q4 2 9 2t8.200 5.500Q14 12.700 9 12.700T.8 7.500z" stroke="#303030" stroke-width="1.300"/><circle cx="9" cy="6.300" r="4.300" fill="#303030"/><path d="M6.600 6.300Q6.700 4 9 3.800" stroke="#80a8cb"/>`)}</div>
                </div>
                <div class="row" style="margin-top:3px">
                  <div class="box" style="width:167px"><span class="pre lead">${ic(16, 16, svg`<circle cx="8" cy="8" r="6.700" stroke="#fff" stroke-width="2.200"/><path d="M8.600 4v4.600H5" stroke="#fff" stroke-width="1.500"/>`)}</span><span class="fill">Last hour</span></div>
                  ${time("Start", "2025/07/18 22:01:49", 57)}
                  ${time("End", "2025/07/18 23:01:49", 51)}
                  <div class="box" style="width:254px"><span class="pre" style="width:94px">Bounding</span><span class="fill">Last Packet</span></div>
                  <div class="box" style="width:169px"><span class="pre" style="width:77px">Interval</span><span class="fill">Auto</span></div>
                </div>
                <div class="gear"><div style="width:42px;border-right:1px solid #a0a0a0;padding:7px 0 0 12px;box-sizing:border-box">${ic(17, 17, svg`<path fill="#303030" d=${cogPath} />`, "96 96 1600 1600")}</div><div style="padding:13px 0 0 9px">${caret(10, 5.500)}</div></div>
              </div>
              <div class="status"><div class="panel">${ic(17, 16, svg`<path d="M.7 2v12.300q0 .9 1 .9h13.600q1 0 1-.9V2M8.500 2v13" stroke="#303030" stroke-width="1.300"/><path fill="#303030" d="M0 0h17v3H0z"/>`)}</div>Showing 725 entries filtered from 725 total entries</div>
              <spi-timeline></spi-timeline>
              <spi-category name="general" open .hits=${[["udp", 494], ["tcp", 170], ["icmp", 61]] as Hit[]}></spi-category>
              ${CATS.map((c) => html`<spi-category name=${c.name} .hits=${c.hits}></spi-category>`)}
            </div>
          </div>
        </div>
      </div>`;
  }
}
